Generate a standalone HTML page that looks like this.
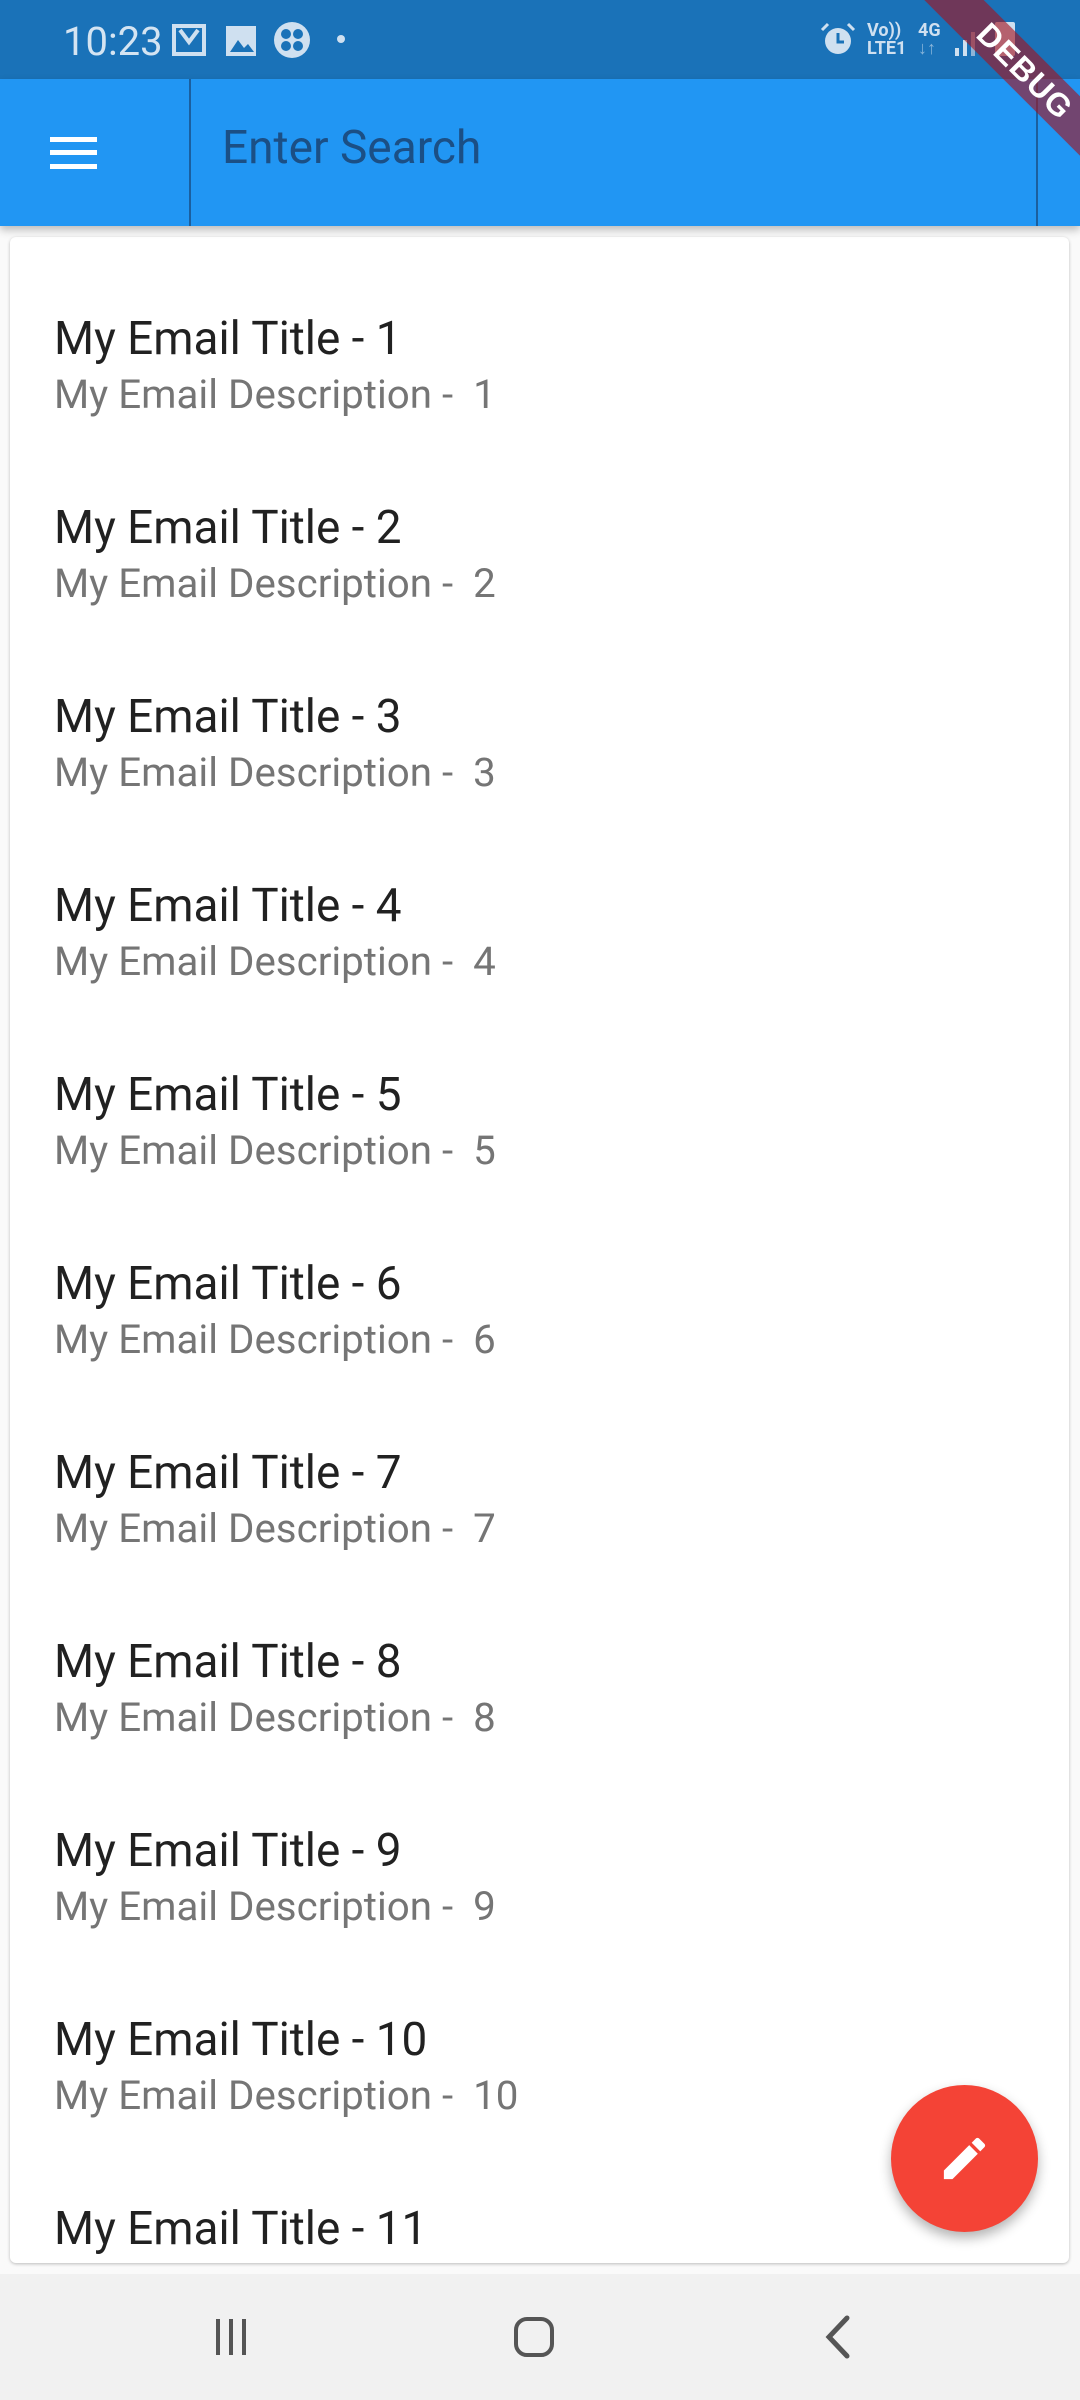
<!DOCTYPE html>
<html><head><meta charset="utf-8"><style>
*{margin:0;padding:0;box-sizing:border-box}
body{width:1080px;height:2400px;position:relative;overflow:hidden;background:#fafafa;font-family:"Roboto","Liberation Sans",sans-serif}
.sb{position:absolute;left:0;top:0;width:1080px;height:79px;background:#1a72b8;color:#cfe0f0}
.ab{position:absolute;left:0;top:79px;width:1080px;height:147px;background:#2196f3;box-shadow:0 4px 8px rgba(0,0,0,.25);z-index:2}
.card{position:absolute;left:10px;top:237px;width:1059px;height:2026px;background:#fff;border-radius:6px;box-shadow:0 1px 3px rgba(0,0,0,.25);overflow:hidden}
.t{position:absolute;left:44px;font-size:45.9px;color:#212121;line-height:1;white-space:pre}
.d{position:absolute;left:44px;font-size:40.3px;color:#757575;line-height:1;white-space:pre}
.nav{position:absolute;left:0;top:2274px;width:1080px;height:126px;background:#f1f1f1}
</style></head><body>
<div class="sb">
 <div style="position:absolute;left:63px;top:18px;font-size:40px;color:#d4e4f2">10:23</div>
 <svg style="position:absolute;left:170px;top:24px" width="120" height="36" viewBox="0 0 120 36">
  <rect x="4" y="2" width="30" height="28" fill="none" stroke="#cfe0f0" stroke-width="4"/><path d="M10 6 L19 18 L28 6" stroke="#cfe0f0" stroke-width="4" fill="none"/>
  <rect x="56" y="2" width="30" height="30" fill="#cfe0f0"/><path d="M60 28 L68 16 L74 24 L78 20 L84 28Z" fill="#1a72b8"/>
 </svg>
 <svg style="position:absolute;left:272px;top:20px" width="80" height="40" viewBox="0 0 80 40">
  <circle cx="20" cy="20" r="18" fill="#cfe0f0"/><circle cx="14" cy="14" r="5" fill="#1a72b8"/><circle cx="26" cy="14" r="5" fill="#1a72b8"/><circle cx="14" cy="26" r="5" fill="#1a72b8"/><circle cx="26" cy="26" r="5" fill="#1a72b8"/>
  <circle cx="69" cy="19" r="4" fill="#cfe0f0"/>
 </svg>
 <svg style="position:absolute;left:820px;top:22px" width="40" height="36" viewBox="0 0 40 36"><circle cx="18" cy="19" r="13" fill="#cfe0f0"/><path d="M18 11v9h6" stroke="#1a72b8" stroke-width="3" fill="none"/><path d="M2 8l6-6M34 8l-6-6" stroke="#cfe0f0" stroke-width="3"/></svg>
 <div style="position:absolute;left:867px;top:22px;font-size:18px;line-height:18px;color:#cfe0f0;font-weight:bold">Vo))<br>LTE1</div>
 <div style="position:absolute;left:918px;top:22px;font-size:18px;line-height:18px;color:#cfe0f0;font-weight:bold">4G<br><span style="opacity:.6">↓↑</span></div>
 <svg style="position:absolute;left:955px;top:30px" width="30" height="26"><rect x="0" y="18" width="4" height="8" fill="#cfe0f0"/><rect x="8" y="10" width="4" height="16" fill="#cfe0f0"/><rect x="16" y="2" width="4" height="24" fill="#8fb4d8"/></svg>
 <div style="position:absolute;left:995px;top:22px;width:20px;height:34px;background:#cfe0f0;border-radius:2px"></div>
</div>
<div class="ab">
 <div style="position:absolute;left:50px;top:58px;width:47px;height:5px;background:#fff"></div>
 <div style="position:absolute;left:50px;top:71px;width:47px;height:5px;background:#fff"></div>
 <div style="position:absolute;left:50px;top:85px;width:47px;height:5px;background:#fff"></div>
 <div style="position:absolute;left:189px;top:0;width:2px;height:147px;background:#1b5f9e"></div>
 <div style="position:absolute;left:1036px;top:0;width:2px;height:147px;background:#1b5f9e"></div>
 <div style="position:absolute;left:222px;top:42px;font-size:46px;line-height:1.2;color:#1b4f85">Enter Search</div>
</div>
<div style="position:absolute;left:865px;top:50px;width:320px;height:42px;background:rgba(165,20,30,.62);transform:rotate(45deg);color:#fff;font-weight:bold;font-size:32px;line-height:42px;text-align:center;z-index:5;font-family:'Liberation Sans',sans-serif;letter-spacing:1px;transform-origin:center">DEBUG</div>
<div class="card">
 <div class="t" style="top:80px">My Email Title - 1</div><div class="d" style="top:138px">My Email Description -  1</div>
 <div class="t" style="top:269px">My Email Title - 2</div><div class="d" style="top:327px">My Email Description -  2</div>
 <div class="t" style="top:458px">My Email Title - 3</div><div class="d" style="top:516px">My Email Description -  3</div>
 <div class="t" style="top:647px">My Email Title - 4</div><div class="d" style="top:705px">My Email Description -  4</div>
 <div class="t" style="top:836px">My Email Title - 5</div><div class="d" style="top:894px">My Email Description -  5</div>
 <div class="t" style="top:1025px">My Email Title - 6</div><div class="d" style="top:1083px">My Email Description -  6</div>
 <div class="t" style="top:1214px">My Email Title - 7</div><div class="d" style="top:1272px">My Email Description -  7</div>
 <div class="t" style="top:1403px">My Email Title - 8</div><div class="d" style="top:1461px">My Email Description -  8</div>
 <div class="t" style="top:1592px">My Email Title - 9</div><div class="d" style="top:1650px">My Email Description -  9</div>
 <div class="t" style="top:1781px">My Email Title - 10</div><div class="d" style="top:1839px">My Email Description -  10</div>
 <div class="t" style="top:1970px">My Email Title - 11</div>
</div>
<div style="position:absolute;left:891px;top:2085px;width:147px;height:147px;border-radius:50%;background:#f44336;box-shadow:0 6px 12px rgba(0,0,0,.3)">
 <svg style="position:absolute;left:46px;top:46px" width="55" height="55" viewBox="0 0 24 24"><path d="M3 17.25V21h3.75L17.81 9.94l-3.75-3.75L3 17.25zM20.71 7.04a1 1 0 000-1.41l-2.340-2.34a1 1 0 00-1.41 0l-1.83 1.83 3.75 3.75 1.83-1.83z" fill="#fff"/></svg>
</div>
<div class="nav">
 <svg style="position:absolute;left:212px;top:42px" width="40" height="40"><rect x="4" y="3" width="4" height="36" fill="#555"/><rect x="17" y="3" width="4" height="36" fill="#555"/><rect x="30" y="3" width="4" height="36" fill="#555"/></svg>
 <div style="position:absolute;left:514px;top:43px;width:40px;height:40px;border:4.5px solid #555;border-radius:13px"></div>
 <svg style="position:absolute;left:820px;top:40px" width="40" height="46"><path d="M27 4 L9 23 L27 42" stroke="#555" stroke-width="5" fill="none" stroke-linecap="round"/></svg>
</div>
</body></html>
